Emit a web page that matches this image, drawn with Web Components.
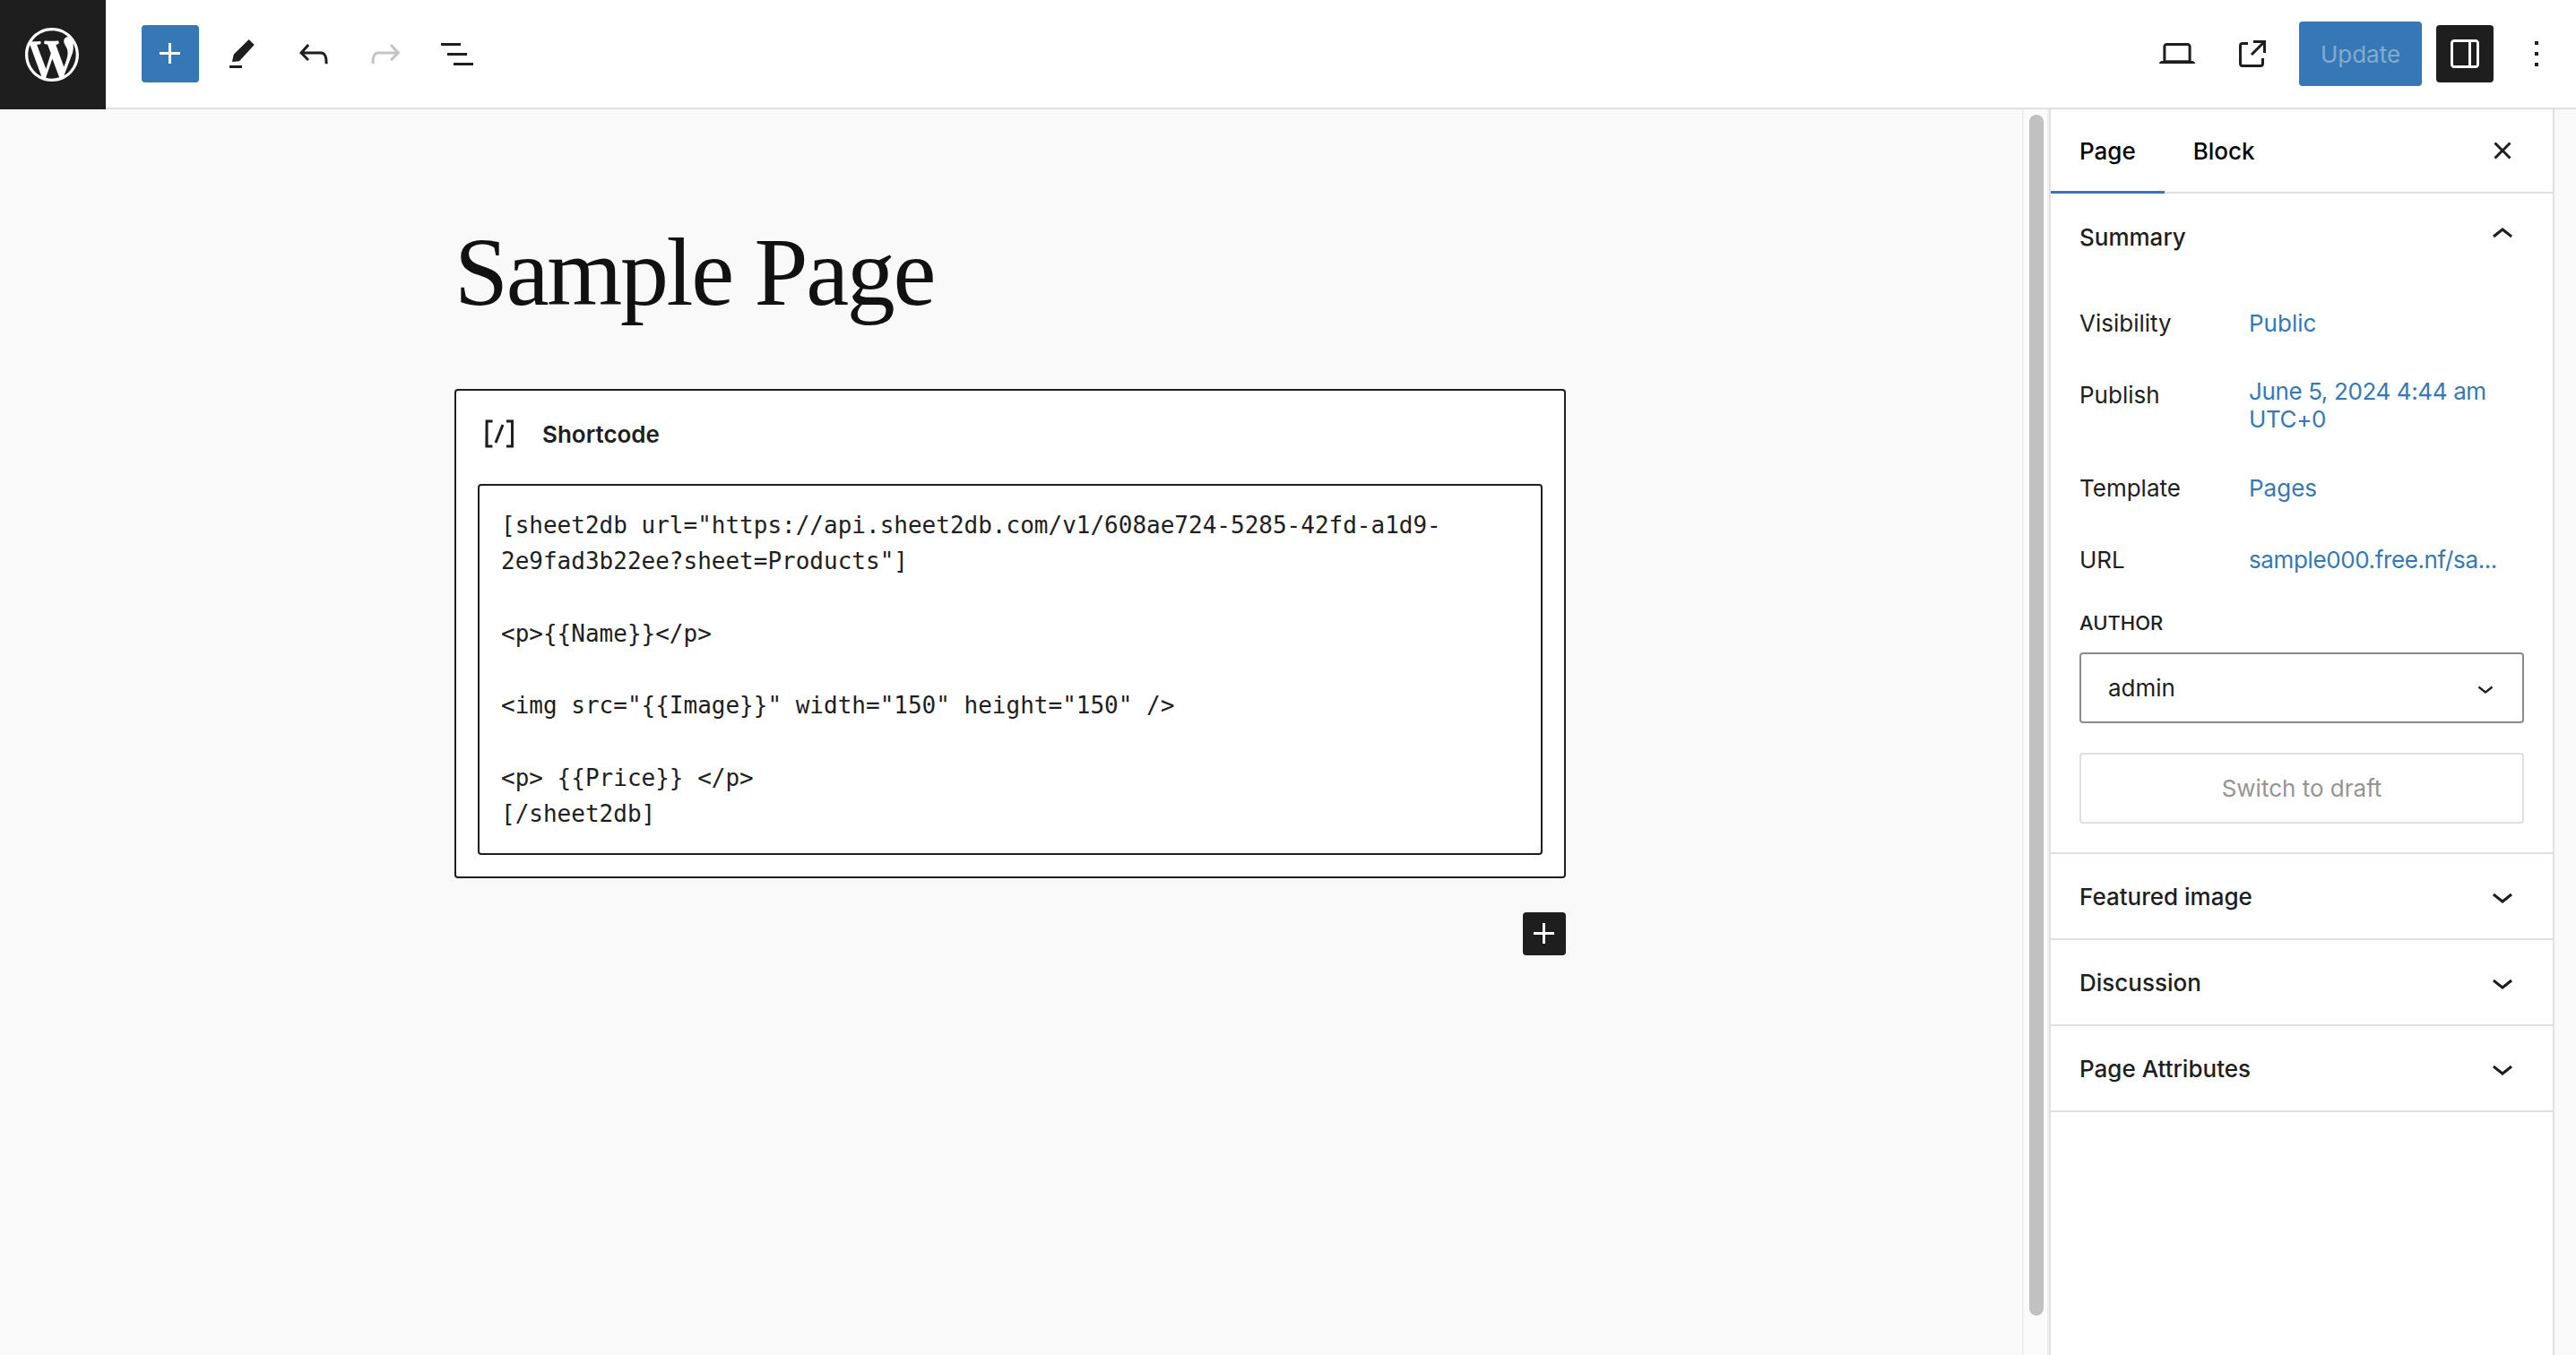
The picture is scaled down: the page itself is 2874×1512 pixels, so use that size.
<!DOCTYPE html>
<html lang="en">
<head>
<meta charset="utf-8">
<title>Edit Page</title>
<style>
  html, body { margin: 0; height: 100%; }
  body {
    width: 2874px;
    height: 1512px;
    overflow: hidden;
    background: #f9f9f9;
    color: #1e1e1e;
    font-family: Inter, "Liberation Sans", sans-serif;
    font-size: 26px;
    display: flex;
    flex-direction: column;
  }
</style>
</head>
<body>
  <wp-topbar></wp-topbar>
  <wp-main>
    <wp-canvas title-text="Sample Page">
      <wp-shortcode-block label="Shortcode">[sheet2db url="https://api.sheet2db.com/v1/608ae724-5285-42fd-a1d9-
2e9fad3b22ee?sheet=Products"]

&lt;p&gt;{{Name}}&lt;/p&gt;

&lt;img src="{{Image}}" width="150" height="150" /&gt;

&lt;p&gt; {{Price}} &lt;/p&gt;
[/sheet2db]</wp-shortcode-block>
    </wp-canvas>
    <wp-scroll-gutter></wp-scroll-gutter>
    <wp-sidebar>
      <wp-summary-panel>
        <wp-meta-row label="Visibility">Public</wp-meta-row>
        <wp-meta-row label="Publish" wrapped tight>June 5, 2024 4:44 am<br>UTC+0</wp-meta-row>
        <wp-meta-row label="Template">Pages</wp-meta-row>
        <wp-meta-row label="URL" tight>sample000.free.nf/sa...</wp-meta-row>
        <wp-author-field value="admin"></wp-author-field>
        <wp-draft-button>Switch to draft</wp-draft-button>
      </wp-summary-panel>
      <wp-closed-panel>Featured image</wp-closed-panel>
      <wp-closed-panel>Discussion</wp-closed-panel>
      <wp-closed-panel>Page Attributes</wp-closed-panel>
    </wp-sidebar>
    <wp-edge-strip></wp-edge-strip>
  </wp-main>

<script>
// icon paths, 24 unit grid like the gutenberg set
const ICONS = {
  plus: 'M11 12.5V17.5H12.5V12.5H17.5V11H12.5V6H11V11H6V12.5H11Z',
  pencil: 'M5 18.5h7V20H5zM15.85 4l3 3-8.35 9.15-4 .35.85-4.15z',
  undo: 'M18.3 11.7c-.6-.6-1.4-.9-2.3-.9H6.7l2.9-3.3-1.1-1-4.5 5L8.5 16l1-1-2.7-2.7H16c.5 0 .9.2 1.3.5 1 1 1 3.4 1 4.5v.3h1.5v-.2c0-1.5 0-4.3-1.5-5.7z',
  redo: 'M15.6 6.5l-1.1 1 2.9 3.3H8c-.9 0-1.7.3-2.3.9-1.4 1.5-1.4 4.2-1.4 5.7v.2h1.5v-.3c0-1.1 0-3.5 1-4.5.3-.3.7-.5 1.3-.5h9.2L14.5 15l1.1 1.1 4.6-4.6-4.6-5z',
  list: 'M3 6h11v1.5H3V6zm3.5 5.5h11V13h-11v-1.5zM21 17H10v1.5h11V17z',
  laptop: 'M20.5 16h-.7V8c0-1.1-.9-2-2-2H6.2c-1.1 0-2 .9-2 2v8h-.7c-.8 0-1.5.7-1.5 1.5h20c0-.8-.7-1.5-1.5-1.5zM5.7 8c0-.3.2-.5.5-.5h11.6c.3 0 .5.2.5.5v7.6H5.7V8z',
  external: 'M19.5 4.5h-7V6h4.44l-5.97 5.97 1.06 1.06L18 7.06v4.44h1.5v-7Zm-13 1a2 2 0 0 0-2 2v10a2 2 0 0 0 2 2h10a2 2 0 0 0 2-2v-3H17v3a.5.5 0 0 1-.5.5h-10a.5.5 0 0 1-.5-.5v-10a.5.5 0 0 1 .5-.5h3V5.5h-3Z',
  drawer: 'M18 4H6c-1.1 0-2 .9-2 2v12c0 1.1.9 2 2 2h12c1.1 0 2-.9 2-2V6c0-1.1-.9-2-2-2zm-4 14.5H6c-.3 0-.5-.2-.5-.5V6c0-.3.2-.5.5-.5h8v13zm4.5-.5c0 .3-.2.5-.5.5h-2.5v-13H18c.3 0 .5.2.5.5v12z',
  more: 'M13 19h-2v-2h2v2zm0-6h-2v-2h2v2zm0-6h-2V5h2v2z',
  close: 'M12 13.06l3.712 3.713 1.061-1.06L13.061 12l3.712-3.712-1.06-1.06L12 10.938 8.288 7.227l-1.061 1.06L10.939 12l-3.712 3.712 1.06 1.061L12 13.061z',
  down: 'M17.5 11.6L12 16l-5.5-4.4.9-1.2L12 14l4.5-3.6 1 1.2z',
  up: 'M6.5 12.4L12 8l5.5 4.4-.9 1.2L12 10l-4.5 3.6-1-1.2z',
  shortcode: 'M16 4.2v1.5h2.5v12.5H16v1.5h4V4.2h-4zM4.2 19.8h4v-1.5H5.8V5.8h2.5V4.2h-4l-.1 15.6zm5.1-3.1l1.4.6 4-10-1.4-.6-4 10z'
};

const WP_LOGO = 'M20 10c0-5.51-4.49-10-10-10C4.48 0 0 4.49 0 10c0 5.52 4.48 10 10 10 5.51 0 10-4.48 10-10zM7.78 15.37L4.37 6.22c.55-.02 1.17-.08 1.17-.08.5-.06.44-1.13-.06-1.11 0 0-1.45.11-2.37.11-.18 0-.37 0-.58-.01C4.12 2.69 6.87 1.11 10 1.11c2.33 0 4.45.87 6.05 2.34-.68-.11-1.65.39-1.65 1.58 0 .74.45 1.36.9 2.1.35.61.55 1.36.55 2.46 0 1.49-1.4 5-1.4 5l-3.03-8.37c.54-.02.82-.17.82-.17.5-.05.44-1.25-.06-1.22 0 0-1.44.12-2.38.12-.87 0-2.33-.12-2.33-.12-.5-.03-.56 1.2-.06 1.22l.92.08 1.26 3.41zM17.41 10c.24-.64.74-1.87.43-4.25.7 1.29 1.05 2.71 1.05 4.25 0 3.29-1.73 6.24-4.4 7.78.97-2.59 1.94-5.2 2.92-7.78zM6.1 18.09C3.12 16.65 1.11 13.53 1.11 10c0-1.3.23-2.48.72-3.59C3.25 10.3 4.67 14.2 6.1 18.09zm4.03-6.63l2.58 6.98c-.86.29-1.76.45-2.71.45-.79 0-1.57-.11-2.29-.33.81-2.38 1.62-4.74 2.42-7.1z';

const BLUE = '#3678b5';

// small base class: subclasses return their shadow markup from html()
class WpElement extends HTMLElement {
  connectedCallback() {
    if (this.shadowRoot) return;
    this.attachShadow({ mode: 'open' });
    this.shadowRoot.innerHTML = this.html();
  }
}

class WpIcon extends WpElement {
  html() {
    const size = this.getAttribute('size') || 48;
    const d = ICONS[this.getAttribute('name')] || '';
    return `
      <style>
        :host { display: block; width: ${size}px; height: ${size}px; flex: none; }
        svg { display: block; fill: currentColor; }
      </style>
      <svg width="${size}" height="${size}" viewBox="0 0 24 24" aria-hidden="true"><path d="${d}"/></svg>`;
  }
}

class WpToolButton extends WpElement {
  html() {
    return `
      <style>
        :host {
          display: flex;
          align-items: center;
          justify-content: center;
          width: 64px;
          height: 64px;
          flex: none;
          border-radius: 4px;
        }
        :host([primary]) { background: ${BLUE}; color: #fff; }
        :host([dark]) { background: #1e1e1e; color: #fff; }
        :host([disabled]) { color: #c4c4c4; }
        :host([narrow]) { width: 48px; }
      </style>
      <wp-icon name="${this.getAttribute('icon')}"></wp-icon>`;
  }
}

class WpTopbar extends WpElement {
  html() {
    return `
      <style>
        :host {
          display: flex;
          align-items: center;
          height: 120px;
          flex: none;
          background: #fff;
          border-bottom: 2px solid #e0e0e0;
          padding-right: 20px;
        }
        .logo {
          width: 116px;
          height: 122px;
          padding-right: 2px;
          margin-bottom: -2px;
          flex: none;
          background: #1e1e1e;
          display: flex;
          align-items: center;
          justify-content: center;
        }
        .logo svg { display: block; fill: #fff; }
        .left { display: flex; gap: 16px; margin-left: 40px; }
        .right { display: flex; align-items: center; margin-left: auto; }
        .update {
          height: 72px;
          width: 137px;
          margin: 0 16px 0 20px;
          border-radius: 4px;
          background: ${BLUE};
          color: rgba(255,255,255,.4);
          display: flex;
          align-items: center;
          justify-content: center;
        }
      </style>
      <div class="logo">
        <svg width="60" height="60" viewBox="0 0 20 20" aria-label="WordPress"><path d="${WP_LOGO}"/></svg>
      </div>
      <div class="left">
        <wp-tool-button primary icon="plus"></wp-tool-button>
        <wp-tool-button icon="pencil"></wp-tool-button>
        <wp-tool-button icon="undo"></wp-tool-button>
        <wp-tool-button disabled icon="redo"></wp-tool-button>
        <wp-tool-button icon="list"></wp-tool-button>
      </div>
      <div class="right">
        <wp-tool-button icon="laptop" style="margin-right:20px"></wp-tool-button>
        <wp-tool-button icon="external"></wp-tool-button>
        <div class="update">Update</div>
        <wp-tool-button dark icon="drawer"></wp-tool-button>
        <wp-tool-button narrow icon="more" style="margin-left:24px"></wp-tool-button>
      </div>`;
  }
}

class WpMain extends WpElement {
  html() {
    return `
      <style>
        :host { display: flex; flex: 1; min-height: 0; }
      </style>
      <slot></slot>`;
  }
}

class WpCanvas extends WpElement {
  html() {
    return `
      <style>
        :host {
          display: block;
          width: 2258px;
          box-sizing: border-box;
          flex: none;
          border-right: 2px solid #ededed;
          padding: 117px 0 0 507px;
          background: #f9f9f9;
        }
        h1 {
          width: 1240px;
          margin: 0 0 65px;
          font: 400 108px/130px "Liberation Serif", serif;
          letter-spacing: -2.35px;
          color: #111;
        }
        .appender {
          width: 48px;
          height: 48px;
          margin: 38px 0 0 1192px;
          border-radius: 4px;
          background: #1e1e1e;
          color: #fff;
        }
      </style>
      <h1>${this.getAttribute('title-text')}</h1>
      <slot></slot>
      <div class="appender"><wp-icon name="plus"></wp-icon></div>`;
  }
}

class WpShortcodeBlock extends WpElement {
  html() {
    return `
      <style>
        :host {
          display: block;
          width: 1240px;
          box-sizing: border-box;
          background: #fff;
          border: 2px solid #1e1e1e;
          border-radius: 4px;
          padding: 0 24px 24px;
        }
        .head {
          display: flex;
          align-items: center;
          height: 96px;
          margin-bottom: 8px;
          font-weight: 600;
        }
        wp-icon { margin-right: 24px; }
        .code {
          border: 2px solid #1e1e1e;
          border-radius: 4px;
          height: 414px;
          box-sizing: border-box;
          padding: 24px 24px 0;
          font: 26px/40.25px "DejaVu Sans Mono", monospace;
          white-space: pre-wrap;
          color: #1e1e1e;
        }
      </style>
      <div class="head">
        <wp-icon name="shortcode"></wp-icon>
        <span>${this.getAttribute('label')}</span>
      </div>
      <div class="code"><slot></slot></div>`;
  }
}

class WpScrollGutter extends WpElement {
  html() {
    return `
      <style>
        :host {
          display: flex;
          flex: none;
          width: 26px;
          box-sizing: content-box;
          padding: 6px 0 44px;
          background: #fbfbfb;
          border-right: 2px solid #f0f0f0;
        }
        .thumb {
          width: 16px;
          margin-left: 6px;
          border-radius: 8px;
          background: #c1c1c1;
        }
      </style>
      <div class="thumb"></div>`;
  }
}

class WpSidebar extends WpElement {
  html() {
    return `
      <style>
        :host {
          display: block;
          flex: none;
          width: 560px;
          background: #fff;
          border-left: 2px solid #e0e0e0;
          border-right: 2px solid #e0e0e0;
        }
        .tabs {
          display: flex;
          align-items: flex-start;
          height: 92px;
          border-bottom: 2px solid #e0e0e0;
          font-weight: 500;
          color: #000;
        }
        .tab {
          height: 91px;
          padding: 0 32px;
          line-height: 94px;
          border-bottom: 3px solid transparent;
        }
        .tab.on { border-bottom-color: ${BLUE}; }
        .close { margin: 22px 32px 0 auto; color: #1e1e1e; }
      </style>
      <div class="tabs">
        <div class="tab on">Page</div>
        <div class="tab">Block</div>
        <wp-icon class="close" name="close"></wp-icon>
      </div>
      <slot></slot>`;
  }
}

class WpSummaryPanel extends WpElement {
  html() {
    return `
      <style>
        :host {
          display: block;
          height: 735px;
          border-bottom: 2px solid #e0e0e0;
        }
        .head {
          display: flex;
          align-items: center;
          justify-content: space-between;
          height: 96px;
          padding: 0 32px;
          font-weight: 500;
        }
        .body { padding: 17px 32px 0; }
        wp-icon { margin-top: -4px; }
      </style>
      <div class="head">
        <span>Summary</span>
        <wp-icon name="up"></wp-icon>
      </div>
      <div class="body"><slot></slot></div>`;
  }
}

class WpMetaRow extends WpElement {
  html() {
    return `
      <style>
        :host {
          display: flex;
          margin-bottom: 16px;
        }
        .label {
          width: 189px;
          height: 64px;
          flex: none;
          line-height: 64px;
        }
        .value {
          min-height: 64px;
          line-height: 64px;
          white-space: nowrap;
          color: ${BLUE};
        }
        :host([wrapped]) .value {
          line-height: 31px;
          padding-top: 12px;
          padding-bottom: 14px;
          min-height: 0;
        }
        :host([tight]) .value { letter-spacing: -.38px; }
      </style>
      <div class="label">${this.getAttribute('label')}</div>
      <div class="value"><slot></slot></div>`;
  }
}

class WpAuthorField extends WpElement {
  html() {
    return `
      <style>
        :host { display: block; }
        .label {
          font-size: 22px;
          font-weight: 500;
          line-height: 44px;
          margin-bottom: 11px;
        }
        .select {
          display: flex;
          align-items: center;
          justify-content: space-between;
          height: 79px;
          box-sizing: border-box;
          border: 2px solid #8c8c8c;
          border-radius: 4px;
          padding: 0 23px 0 30px;
        }
      </style>
      <div class="label">AUTHOR</div>
      <div class="select">
        <span>${this.getAttribute('value')}</span>
        <wp-icon name="down" size="36"></wp-icon>
      </div>`;
  }
}

class WpDraftButton extends WpElement {
  html() {
    return `
      <style>
        :host {
          display: flex;
          align-items: center;
          justify-content: center;
          height: 79px;
          box-sizing: border-box;
          margin-top: 33px;
          border: 2px solid #e0e0e0;
          border-radius: 4px;
          color: #949494;
        }
      </style>
      <slot></slot>`;
  }
}

class WpClosedPanel extends WpElement {
  html() {
    return `
      <style>
        :host {
          display: flex;
          align-items: center;
          justify-content: space-between;
          height: 94px;
          padding: 0 32px;
          font-weight: 500;
          border-bottom: 2px solid #e0e0e0;
        }
      </style>
      <span><slot></slot></span>
      <wp-icon name="down"></wp-icon>`;
  }
}

class WpEdgeStrip extends WpElement {
  html() {
    return `<style>:host { display: block; flex: 1; background: #f9f9f9; }</style>`;
  }
}

customElements.define('wp-icon', WpIcon);
customElements.define('wp-tool-button', WpToolButton);
customElements.define('wp-topbar', WpTopbar);
customElements.define('wp-main', WpMain);
customElements.define('wp-canvas', WpCanvas);
customElements.define('wp-shortcode-block', WpShortcodeBlock);
customElements.define('wp-scroll-gutter', WpScrollGutter);
customElements.define('wp-sidebar', WpSidebar);
customElements.define('wp-summary-panel', WpSummaryPanel);
customElements.define('wp-meta-row', WpMetaRow);
customElements.define('wp-author-field', WpAuthorField);
customElements.define('wp-draft-button', WpDraftButton);
customElements.define('wp-closed-panel', WpClosedPanel);
customElements.define('wp-edge-strip', WpEdgeStrip);
</script>
</body>
</html>
